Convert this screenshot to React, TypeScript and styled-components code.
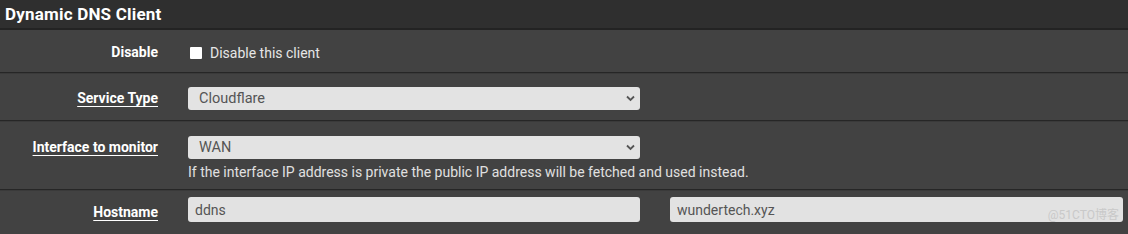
import React from "react";
import styled, { createGlobalStyle } from "styled-components";

const GlobalStyle = createGlobalStyle`
  html, body {
    margin: 0;
    padding: 0;
    background: #424242;
  }
  body {
    font-family: Roboto, "Liberation Sans", Arial, sans-serif;
  }
`;

const Panel = styled.section`
  width: 1128px;
  height: 234px;
  overflow: hidden;
  background: #424242;
`;

const Heading = styled.h2`
  margin: 0;
  height: 28px;
  padding: 0 5px;
  display: flex;
  align-items: center;
  background: #2f2f2f;
  border-bottom: 2px solid #232323;
  color: #ffffff;
  font-size: 17px;
  font-weight: 700;
  letter-spacing: 0.2px;
`;

const Row = styled.div<{ $height: number; $top: number }>`
  display: grid;
  grid-template-columns: 158px 1fr;
  column-gap: 30px;
  align-items: start;
  height: ${(p) => p.$height}px;
  padding-top: ${(p) => p.$top}px;
  padding-right: 5px;
  box-sizing: border-box;
  border-top: 1px solid #262626;
  box-shadow: inset 0 1px 0 #3a3a3a;

  &:first-of-type {
    border-top: none;
    box-shadow: none;
  }
`;

const Label = styled.span<{ $link?: boolean; $drop?: number }>`
  justify-self: end;
  margin-top: ${(p) => p.$drop ?? 0}px;
  color: #ffffff;
  font-size: 14px;
  font-weight: 700;
  line-height: 23px;
  white-space: nowrap;
  text-decoration: ${(p) => (p.$link ? "underline" : "none")};
  text-underline-offset: 3px;
  text-decoration-thickness: 1px;
`;

const Controls = styled.div<{ $split?: boolean }>`
  display: grid;
  grid-template-columns: ${(p) => (p.$split ? "452px 1fr" : "452px")};
  column-gap: 30px;
  row-gap: 5px;
`;

const CheckLine = styled.label`
  display: flex;
  align-items: center;
  gap: 8px;
  height: 23px;
  padding-left: 2px;
  color: #e6e6e6;
  font-size: 14px;
`;

const Box = styled.span`
  width: 12px;
  height: 12px;
  background: #ffffff;
  border-radius: 1px;
`;

const SelectBox = styled.div`
  position: relative;
  height: 23px;
  display: flex;
  align-items: center;
  padding: 0 11px;
  background: #e3e3e3;
  border-radius: 3px;
  color: #555555;
  font-size: 14.5px;
`;

const Chevron = styled.svg`
  position: absolute;
  right: 5px;
  top: 8px;
`;

const Field = styled.div`
  position: relative;
  height: 25px;
  display: flex;
  align-items: center;
  padding: 0 7px;
  background: #e2e2e2;
  border-radius: 3px;
  color: #555555;
  font-size: 14px;
`;

const Help = styled.div`
  color: #e0e0e0;
  font-size: 14px;
  line-height: 16px;
  white-space: nowrap;
`;

const Watermark = styled.span`
  position: absolute;
  right: 4px;
  bottom: 0px;
  color: #c9c9c9;
  font-size: 12px;
  font-family: Roboto, "Noto Sans CJK SC", sans-serif;
`;

const Select = ({ value }: { value: string }) => (
  <SelectBox>
    {value}
    <Chevron width="9" height="7" viewBox="0 0 9 7">
      <path d="M1 1.5 L4.5 5 L8 1.5" fill="none" stroke="#555" strokeWidth="1.8" />
    </Chevron>
  </SelectBox>
);

export default function App() {
  return (
    <>
      <GlobalStyle />
      <Panel>
        <Heading>Dynamic DNS Client</Heading>
        <Row $height={42} $top={11}>
          <Label>Disable</Label>
          <Controls>
            <CheckLine>
              <Box />
              Disable this client
            </CheckLine>
          </Controls>
        </Row>
        <Row $height={48} $top={14}>
          <Label $link>Service Type</Label>
          <Controls>
            <Select value="Cloudflare" />
          </Controls>
        </Row>
        <Row $height={69} $top={15}>
          <Label $link>Interface to monitor</Label>
          <Controls>
            <Select value="WAN" />
            <Help>
              If the interface IP address is private the public IP address will be fetched and used instead.
            </Help>
          </Controls>
        </Row>
        <Row $height={50} $top={7}>
          <Label $link $drop={4}>Hostname</Label>
          <Controls $split>
            <Field>ddns</Field>
            <Field>
              wundertech.xyz
              <Watermark>@51CTO博客</Watermark>
            </Field>
          </Controls>
        </Row>
      </Panel>
    </>
  );
}
